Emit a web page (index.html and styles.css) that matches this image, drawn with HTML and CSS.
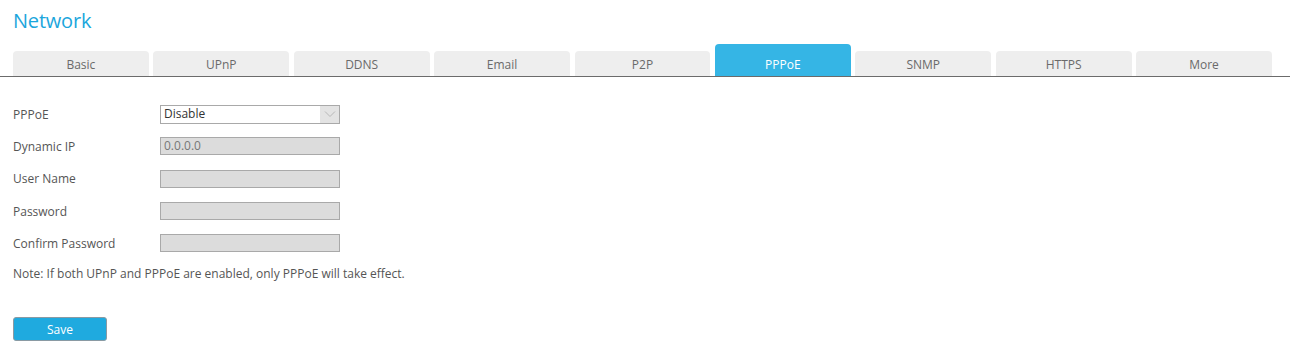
FILE: index.html
```html
<!DOCTYPE html>
<html>
<head>
<meta charset="utf-8">
<title>Network</title>
<link rel="stylesheet" href="styles.css">
</head>
<body>
<div class="page">
  <h1 class="title">Network</h1>
  <div class="tabs">
    <div class="tab">Basic</div>
    <div class="tab">UPnP</div>
    <div class="tab">DDNS</div>
    <div class="tab">Email</div>
    <div class="tab">P2P</div>
    <div class="tab active">PPPoE</div>
    <div class="tab">SNMP</div>
    <div class="tab">HTTPS</div>
    <div class="tab">More</div>
  </div>
  <div class="form">
    <div class="row">
      <label class="label">PPPoE</label>
      <div class="select">
        <span class="select-value">Disable</span>
        <span class="select-arrow">
          <svg width="12" height="8" viewBox="0 0 12 8"><path d="M1 1.5 L6 6.5 L11 1.5" fill="none" stroke="#b8b8b8" stroke-width="1"/></svg>
        </span>
      </div>
    </div>
    <div class="row">
      <label class="label">Dynamic IP</label>
      <div class="input">0.0.0.0</div>
    </div>
    <div class="row">
      <label class="label">User Name</label>
      <div class="input"></div>
    </div>
    <div class="row">
      <label class="label">Password</label>
      <div class="input"></div>
    </div>
    <div class="row">
      <label class="label">Confirm Password</label>
      <div class="input"></div>
    </div>
    <p class="note">Note: If both UPnP and PPPoE are enabled, only PPPoE will take effect.</p>
    <button class="save">Save</button>
  </div>
</div>
</body>
</html>
```
FILE: styles.css
```css
* { box-sizing: border-box; }
html, body { margin: 0; padding: 0; background: #fff; }
body {
  font-family: "Open Sans", "Noto Sans", sans-serif;
  color: #555;
}
.page {
  width: 1297px;
  height: 353px;
  padding-top: 7px;
  overflow: hidden;
}
.title {
  margin: 0 0 0 13px;
  font-size: 20px;
  line-height: 27px;
  font-weight: 400;
  color: #1ba6dc;
  letter-spacing: -0.2px;
}
.tabs {
  margin-top: 10px;
  width: 1290px;
  height: 33px;
  padding-left: 13px;
  display: flex;
  align-items: flex-end;
  gap: 4.6px;
  border-bottom: 1px solid #6b6b6b;
}
.tab {
  width: 135.8px;
  flex: none;
  height: 25px;
  background: #eeeeee;
  border-radius: 4px 4px 0 0;
  color: #6a6a6a;
  font-size: 12px;
  display: flex;
  align-items: center;
  justify-content: center;
  padding-top: 2px;
}
.tab.active {
  height: 32px;
  background: #35b5e5;
  color: #fff;
  padding-top: 8px;
}
.form {
  padding-left: 13px;
  padding-top: 21px;
}
.row {
  display: flex;
  align-items: center;
  height: 32.3px;
}
.label {
  width: 147px;
  font-size: 12px;
  color: #555;
}
.select {
  width: 180px;
  height: 19px;
  border: 1px solid #a9a9a9;
  background: #fff;
  display: flex;
  align-items: stretch;
}
.select-value {
  flex: 1;
  font-size: 12px;
  color: #333;
  padding-left: 3px;
  line-height: 16px;
}
.select-arrow {
  width: 19px;
  background: #e3e3e3;
  display: flex;
  align-items: center;
  justify-content: center;
}
.input {
  width: 180px;
  height: 18px;
  border: 1px solid #a9a9a9;
  background: #dcdcdc;
  font-size: 12px;
  color: #777;
  padding-left: 3px;
  line-height: 15px;
}
.note {
  margin: 7px 0 0 0;
  font-size: 12px;
  color: #555;
  line-height: 16px;
}
.save {
  margin-top: 35px;
  width: 94px;
  height: 24px;
  background: #1faadf;
  border: 1px solid #8a9aa3;
  border-radius: 3px;
  color: #fff;
  font-family: "Open Sans", "Noto Sans", sans-serif;
  font-size: 12px;
  padding: 0;
}
```
